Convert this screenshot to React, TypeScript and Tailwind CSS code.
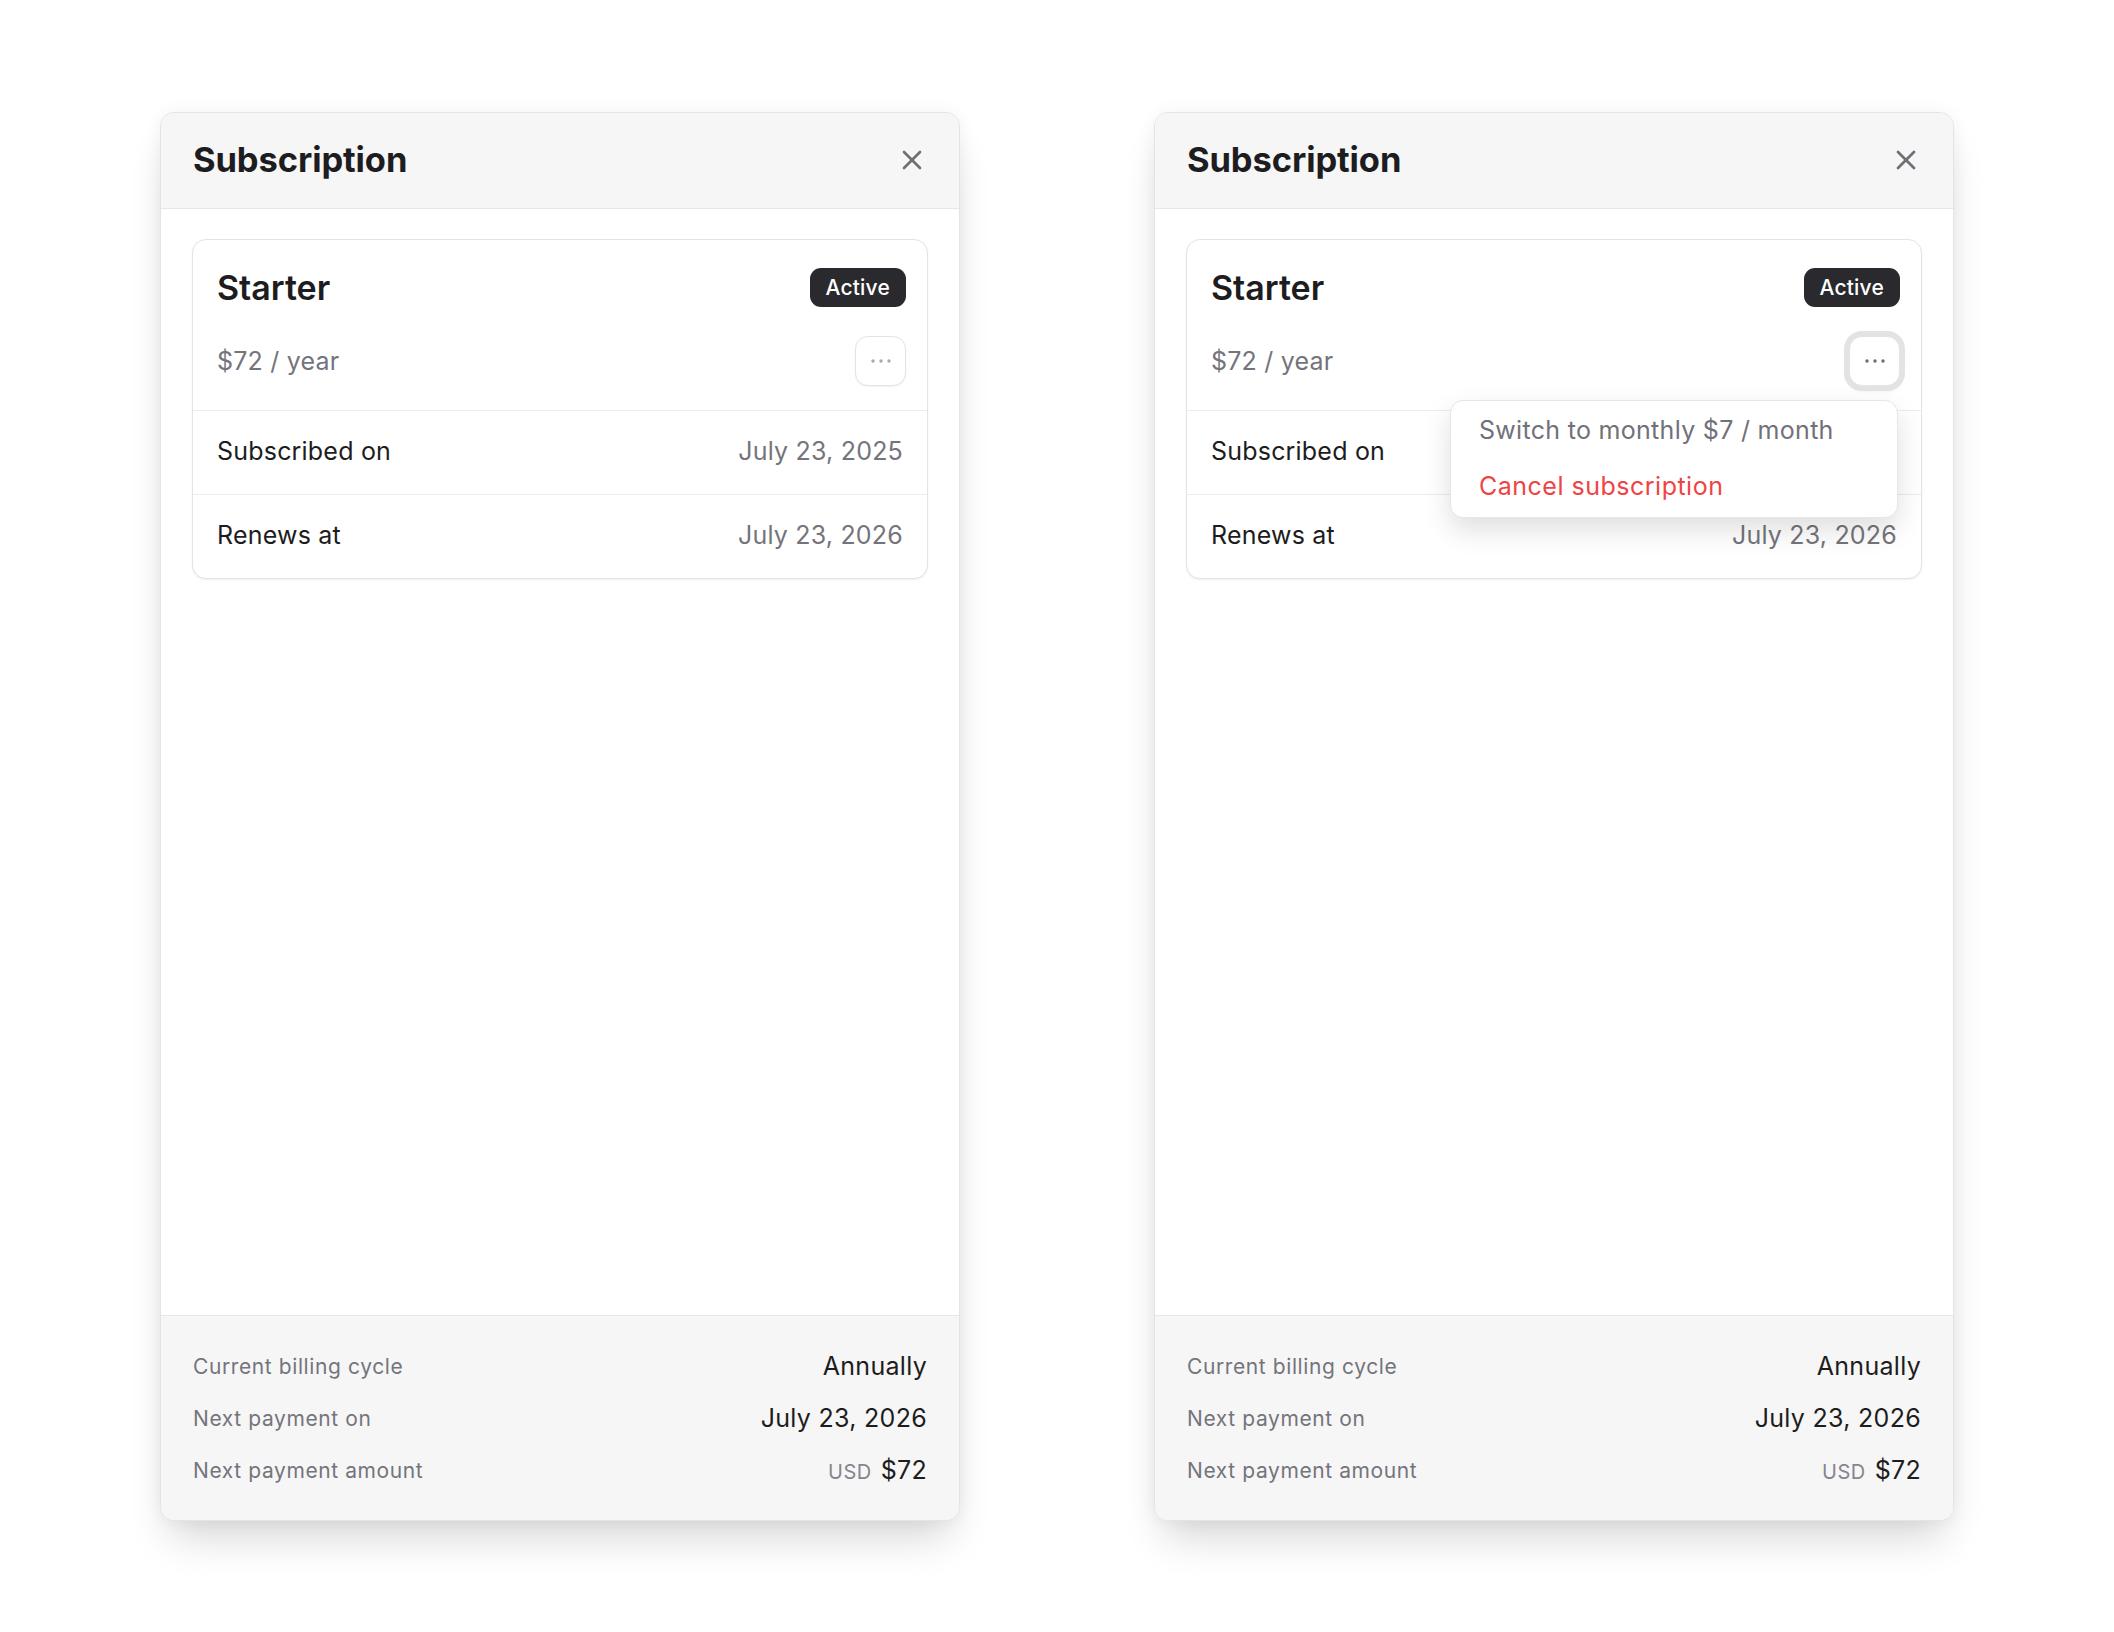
import { X } from 'lucide-react'

type PanelProps = {
  menuOpen?: boolean
}

function Dots({ dark }: { dark?: boolean }) {
  return (
    <svg width="24" height="6" viewBox="0 0 24 6" className={dark ? 'text-[#6b6b74]' : 'text-[#a8a8b0]'}>
      <circle cx="4" cy="3" r="1.7" fill="currentColor" />
      <circle cx="12" cy="3" r="1.7" fill="currentColor" />
      <circle cx="20" cy="3" r="1.7" fill="currentColor" />
    </svg>
  )
}

function SubscriptionPanel({ menuOpen = false }: PanelProps) {
  return (
    <div className="w-[800px] h-[1409px] flex flex-col bg-white border border-[#e4e4e7] rounded-[14px] overflow-visible shadow-[0_26px_40px_-10px_rgba(0,0,0,0.16),0_0_18px_rgba(0,0,0,0.05)]">
      {/* Header */}
      <div className="h-[96px] shrink-0 flex items-center justify-between pl-8 pr-[31px] bg-[#f6f6f6] border-b border-[#e7e7e9] rounded-t-[13px]">
        <h2 className="text-[34.5px] font-bold text-[#1d1d21] tracking-[-0.1px]">Subscription</h2>
        <button className="text-[#6f6f78]">
          <X size={32} strokeWidth={2} />
        </button>
      </div>

      {/* Body */}
      <div className="flex-1 px-[31px] pt-[30px]">
        <div className="relative border border-[#e4e4e7] rounded-[14px] bg-white shadow-[0_1px_2px_rgba(0,0,0,0.07)]">
          <div className="pl-6 pr-[21px] py-6 flex flex-col gap-6">
            <div className="h-12 flex items-center justify-between">
              <span className="text-[34px] font-semibold text-[#1d1d21]">Starter</span>
              <span className="h-[39px] px-4 flex items-center rounded-[11px] bg-[#2a2a2e] text-white text-[21px] font-medium tracking-[0.2px]">
                Active
              </span>
            </div>
            <div className="h-[50px] flex items-center justify-between">
              <span className="text-[25px] tracking-[0.2px] text-[#74747c] translate-y-[1px]">$72 / year</span>
              <div className="relative">
                <button
                  className={
                    menuOpen
                      ? 'w-[51px] h-[50px] flex items-center justify-center rounded-[13px] bg-white border border-[#e4e4e7] shadow-[0_0_0_5px_#e3e3e5,0_3px_6px_rgba(0,0,0,0.12)]'
                      : 'w-[51px] h-[50px] flex items-center justify-center rounded-[13px] bg-white border border-[#e4e4e7] shadow-[0_1px_2px_rgba(0,0,0,0.06)]'
                  }
                >
                  <Dots dark={menuOpen} />
                </button>
                {menuOpen && (
                  <div className="absolute z-10 top-full right-[2px] mt-[14px] w-[448px] py-[2px] bg-white border border-[#e6e6e8] rounded-[13px] shadow-[0_12px_28px_rgba(0,0,0,0.13)]">
                    <div className="h-[56px] flex items-center px-7 text-[25px] tracking-[0.3px] text-[#71717a]">
                      Switch to monthly $7 / month
                    </div>
                    <div className="h-[56px] flex items-center px-7 text-[25px] tracking-[0.5px] text-[#ef4444]">
                      Cancel subscription
                    </div>
                  </div>
                )}
              </div>
            </div>
          </div>
          <div className="h-[84px] flex items-center justify-between px-6 border-t border-[#ececee]">
            <span className="text-[25px] tracking-[0.2px] text-[#1d1d21]">Subscribed on</span>
            <span className="text-[25px] tracking-[0.2px] text-[#74747c]">July 23, 2025</span>
          </div>
          <div className="h-[84px] flex items-center justify-between px-6 border-t border-[#ececee]">
            <span className="text-[25px] tracking-[0.2px] text-[#1d1d21]">Renews at</span>
            <span className="text-[25px] tracking-[0.2px] text-[#74747c]">July 23, 2026</span>
          </div>
        </div>
      </div>

      {/* Footer */}
      <div className="shrink-0 bg-[#f6f6f6] border-t border-[#e7e7e9] rounded-b-[13px] px-8 pt-[33px] pb-[31px] flex flex-col gap-4">
        <div className="h-9 flex items-center justify-between">
          <span className="text-[21px] tracking-[0.6px] text-[#74747c]">Current billing cycle</span>
          <span className="text-[25px] tracking-[0.3px] text-[#1d1d21]">Annually</span>
        </div>
        <div className="h-9 flex items-center justify-between">
          <span className="text-[21px] tracking-[0.6px] text-[#74747c]">Next payment on</span>
          <span className="text-[25px] tracking-[0.3px] text-[#1d1d21]">July 23, 2026</span>
        </div>
        <div className="h-9 flex items-center justify-between">
          <span className="text-[21px] tracking-[0.6px] text-[#74747c]">Next payment amount</span>
          <span className="flex items-baseline gap-[9px]">
            <span className="text-[20px] tracking-[0.5px] text-[#85858d]">USD</span>
            <span className="text-[25px] tracking-[0.3px] text-[#1d1d21]">$72</span>
          </span>
        </div>
      </div>
    </div>
  )
}

export default function App() {
  return (
    <div className="h-screen w-full bg-white flex items-center justify-center gap-[194px] font-['Inter',sans-serif]">
      <SubscriptionPanel />
      <SubscriptionPanel menuOpen />
    </div>
  )
}
